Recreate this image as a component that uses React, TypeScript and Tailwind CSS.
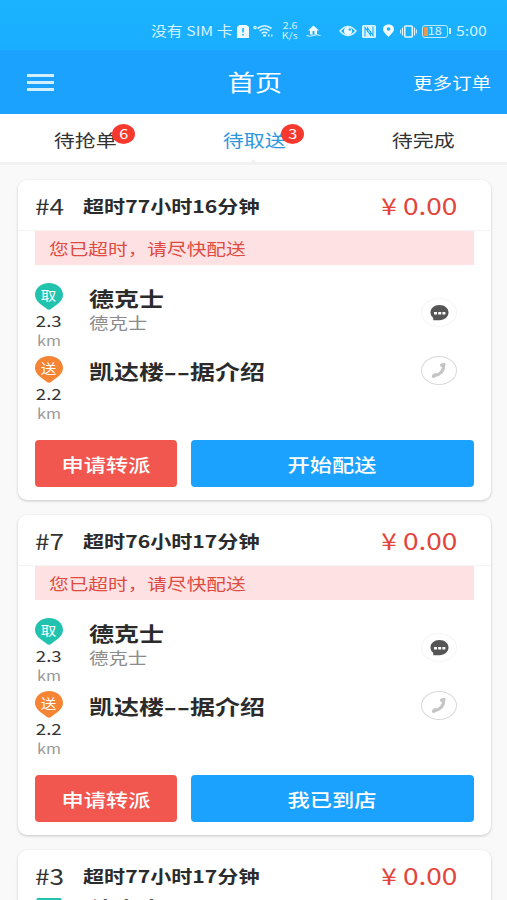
import type { ReactNode } from 'react';
import clsx from 'clsx';

const tabs = [
  { label: '待抢单', count: 6, active: false },
  { label: '待取送', count: 3, active: true },
  { label: '待完成', count: 0, active: false },
];

const orders = [
  { no: '#4', time: '超时77小时16分钟', late: true, action: '开始配送' },
  { no: '#7', time: '超时76小时17分钟', late: true, action: '我已到店' },
  { no: '#3', time: '超时77小时17分钟', late: false, action: '开始配送' },
];

// Wide lettering: the glyphs are stretched sideways by a fifth
function Wide({ className, children }: { className?: string; children: ReactNode }) {
  return (
    <span className={clsx('inline-block shrink-0 scale-x-[1.2] whitespace-nowrap leading-none', className)}>
      {children}
    </span>
  );
}

function StatusBar() {
  return (
    <div className="flex h-[50px] items-center bg-gradient-to-b from-[#1ab3ff] to-[#1aaeff] pt-3 text-[#d6f3ff]">
      <Wide className="ml-[151px] w-[85px] origin-left text-[13.2px]">没有 SIM 卡</Wide>
      <svg className="ml-px shrink-0" width="12" height="13" viewBox="0 0 12 13">
        <path d="M2.5 0H9.5L12 2V13H0V2Z" fill="#effaff" />
        <path d="M6 3v4.5M6 9v1.5" stroke="#1ab0ff" strokeWidth="1.6" />
      </svg>
      <svg className="ml-1 shrink-0" width="21" height="14" viewBox="0 0 21 14" fill="none" stroke="#d6f3ff">
        <circle cx="2" cy="3.5" r="1.2" strokeWidth="1.2" />
        <path d="M4.5 4.5Q11.5-1 18.5 4.5M6.5 7Q11.5 3 16.5 7M8.7 9.3Q11.5 7.3 14.3 9.3" strokeWidth="1.6" />
        <path d="M10 11.5h3M15 11.5h1.5M18 11.5h1.5" strokeWidth="1.8" />
      </svg>
      <div className="ml-[5px] flex w-[22px] flex-col items-center gap-px text-[8.8px]">
        <Wide>2.6</Wide>
        <Wide>K/s</Wide>
      </div>
      <svg className="ml-[5px] shrink-0" width="15" height="12" viewBox="0 0 15 12">
        <path d="M7.5 0.5 13 5.5H11V9.5H4V5.5H2Z" fill="#effaff" />
        <path d="M6.5 6h2v3.5h-2z" fill="#1ab0ff" />
        <path d="M0.5 10.5Q4 12 7.5 10.5T14.5 10.5" stroke="#d6f3ff" fill="none" />
      </svg>
      <svg className="ml-[18px] shrink-0" width="18" height="12" viewBox="0 0 18 12">
        <path d="M1 6Q9-3 17 6Q9 15 1 6Z" fill="none" stroke="#d6f3ff" strokeWidth="1.5" />
        <circle cx="9" cy="6" r="4" fill="#effaff" />
        <circle cx="10.8" cy="4.5" r="1.2" fill="#1ab0ff" />
      </svg>
      <svg className="ml-[5px] shrink-0" width="14" height="13" viewBox="0 0 14 13">
        <rect width="14" height="13" rx="1.5" fill="#d6f3ff" />
        <path d="M3 11.5V2.5L8.5 10V6M11 1.5V10.5L5.5 3V7" fill="none" stroke="#1ab0ff" strokeWidth="1.1" />
      </svg>
      <svg className="ml-[6px] shrink-0" width="13" height="14" viewBox="0 0 12 14">
        <path d="M6 0.5C9.2 0.5 11.5 2.5 11.5 5.2C11.5 8 8 10.5 6 13C4 10.5 0.5 8 0.5 5.2C0.5 2.5 2.8 0.5 6 0.5Z" fill="#effaff" />
        <circle cx="6" cy="5" r="1.8" fill="#1ab0ff" />
      </svg>
      <svg className="ml-[5px] shrink-0" width="17" height="13" viewBox="0 0 17 13" fill="none" stroke="#e4f7ff" strokeWidth="1.6">
        <rect x="4.7" y="1" width="7.6" height="11" rx="1" />
        <path d="M2.5 2.5v8M14.5 2.5v8M0.7 4.5v4M16.3 4.5v4" strokeWidth="1" />
      </svg>
      <div className="relative ml-[5px] flex h-[13px] w-[26px] shrink-0 items-center justify-center rounded-[3px] border border-[#bdeaff]">
        <span className="absolute top-[1px] bottom-[1px] left-[1px] w-1 bg-[#e79a4d]" />
        <Wide className="relative text-[10.5px]">18</Wide>
      </div>
      <span className="ml-[1px] h-[6px] w-[2px] shrink-0 bg-[#d6f3ff]" />
      <Wide className="ml-[5px] origin-left text-[13.2px]">5:00</Wide>
    </div>
  );
}

function Pin({ label, color }: { label: string; color: string }) {
  return (
    <div className={clsx('relative h-[27px] w-7', color)}>
      <svg width="28" height="27" viewBox="0 0 28 27">
        <path d="M14 0C22 0 28 5 28 12C28 18.5 21 22 16 26Q14 27.5 12 26C7 22 0 18.5 0 12C0 5 6 0 14 0Z" fill="currentColor" />
      </svg>
      <span className="absolute inset-x-0 top-[5px] flex justify-center text-[13px] text-white">
        <Wide>{label}</Wide>
      </span>
    </div>
  );
}

function Stop({ label, color, distance, children }: { label: string; color: string; distance: string; children: ReactNode }) {
  return (
    <div className="flex h-[73px]">
      <div className="flex w-7 flex-col items-center">
        <Pin label={label} color={color} />
        <Wide className="mt-[3px] text-[15.5px] text-[#333]">{distance}</Wide>
        <Wide className="mt-[5px] text-[13.5px] text-[#999]">km</Wide>
      </div>
      <div className="ml-[26px] flex flex-1 justify-between">{children}</div>
    </div>
  );
}

function OrderCard({ order }: { order: (typeof orders)[number] }) {
  return (
    <div className="h-[320px] shrink-0 rounded-[9px] bg-white shadow-[0_1px_3px_rgba(0,0,0,0.2)]">
      <div className={clsx('flex items-center pr-[34px] pl-[17px]', order.late ? 'h-[51px] border-b border-[#f4f4f4] pt-[1px]' : 'h-[48px] pt-[3px]')}>
        <Wide className="w-12 origin-left text-[21.8px] text-[#333]">{order.no}</Wide>
        <Wide className="origin-left text-[17.6px] font-bold text-[#2b2b2b]">{order.time}</Wide>
        <Wide className="ml-auto origin-right text-[23.4px] text-[#e2453c]">
          <span className="mr-[5px]">¥</span>0.00
        </Wide>
      </div>
      <div className={clsx('px-[17px]', !order.late && 'overflow-hidden')}>
        {order.late && (
          <div className="mb-[18px] flex h-[34px] items-center bg-[#fee2e3] pl-[14px]">
            <Wide className="origin-left text-[16.4px] text-[#df4a41]">您已超时，请尽快配送</Wide>
          </div>
        )}
        <div className={clsx(!order.late && '-mt-[5px]')}>
          <Stop label="取" color="text-[#22c3ae]" distance="2.3">
            <div className="flex flex-col pt-[5px]">
              <Wide className="origin-left text-[20.8px] font-bold text-[#2b2b2b]">德克士</Wide>
              <Wide className="mt-[5px] origin-left text-[16.2px] text-[#8b8b8b]">德克士</Wide>
            </div>
            <div className="mt-[15px] mr-[17px] flex h-[29px] w-[36px] items-center justify-center rounded-[50%] border border-[#f5f5f5]">
              <svg width="19" height="16" viewBox="0 0 19 16">
                <path d="M9.5 0C14.7 0 18.5 3.3 18.5 7.6C18.5 12 14.7 15.2 9.5 15.2H3.2V12.8C1.5 11.5 0.5 9.7 0.5 7.6C0.5 3.3 4.3 0 9.5 0Z" fill="#555" />
                <path d="M4 7h3v2.6H4zM8.2 7h3v2.6h-3zM12.4 7h3v2.6h-3z" fill="#fff" />
              </svg>
            </div>
          </Stop>
          <Stop label="送" color="text-[#f58435]" distance="2.2">
            <div className="flex flex-col pt-[5px]">
              <Wide className="origin-left text-[20.8px] font-bold text-[#2b2b2b]">
                凯达楼<span className="mr-[6.4px] inline-block origin-left scale-x-[1.45]">--</span>据介绍
              </Wide>
            </div>
            <div className="mr-[17px] flex h-[29px] w-[36px] items-center justify-center rounded-[50%] border border-[#d9d9d9]">
              <svg width="16" height="17" viewBox="0 0 16 17" fill="none" stroke="#c4c4c4" strokeLinecap="round">
                <path d="M12.6 3.5C13 8.5 9 13 3.2 13.8" strokeWidth="3" />
                <path d="M10.8 3.2 12.8 2.6M2.6 14.2 4 12.8" strokeWidth="3.6" />
              </svg>
            </div>
          </Stop>
        </div>
        <div className="mt-[11px] flex gap-[14px]">
          <button className="flex h-[47px] w-[142px] items-center justify-center rounded-[4px] bg-[#f1574f] pt-[1px] text-[18.5px] font-medium text-white">
            <Wide>申请转派</Wide>
          </button>
          <button className="flex h-[47px] flex-1 items-center justify-center rounded-[4px] bg-[#1ba2ff] pt-[1px] text-[18.5px] font-medium text-white">
            <Wide>{order.action}</Wide>
          </button>
        </div>
      </div>
    </div>
  );
}

export default function App() {
  return (
    <div className="flex h-[900px] w-[507px] flex-col overflow-hidden bg-[#f9f9fa] font-['Noto_Sans_CJK_SC',sans-serif]">
      <StatusBar />

      {/* Title bar */}
      <header className="grid h-[64px] shrink-0 grid-cols-3 items-center bg-[#1ba2ff] text-white">
        <div className="ml-[27px] flex w-[27px] flex-col gap-[4px]">
          <span className="h-[3px] bg-[#d3effd]" />
          <span className="h-[3px] bg-[#d3effd]" />
          <span className="h-[3px] bg-[#d3effd]" />
        </div>
        <h1 className="flex justify-center pt-px pl-[2px] text-[22.8px]">
          <Wide>首页</Wide>
        </h1>
        <div className="flex justify-end pr-4 text-[16.3px]">
          <Wide className="origin-right">更多订单</Wide>
        </div>
      </header>

      {/* Tabs */}
      <nav className="grid h-[51px] shrink-0 grid-cols-3 border-b-[3px] border-[#f2f2f2] bg-white">
        {tabs.map((tab) => (
          <div
            key={tab.label}
            className={clsx(
              'relative flex items-center justify-center pt-[3px] pl-[2px] text-[17.5px]',
              tab.active ? 'text-[#2f97dc]' : 'text-[#333]'
            )}
          >
            <Wide>{tab.label}</Wide>
            {tab.count > 0 && (
              <span className="absolute top-[10px] left-[112px] flex h-[20px] w-[23px] items-center justify-center rounded-[50%] bg-[#f5392f] text-[13.5px] text-white">
                <Wide>{tab.count}</Wide>
              </span>
            )}
            {tab.active && (
              <span className="absolute -bottom-[3px] left-1/2 -ml-[6px] h-[6px] w-3 bg-[#f2f2f2] [clip-path:polygon(50%_0,100%_100%,0_100%)]" />
            )}
          </div>
        ))}
      </nav>

      {/* Order list */}
      <main className="flex flex-1 flex-col gap-[15px] overflow-hidden pt-[15px] pr-4 pl-[18px]">
        {orders.map((order) => (
          <OrderCard key={order.no} order={order} />
        ))}
      </main>
    </div>
  );
}
